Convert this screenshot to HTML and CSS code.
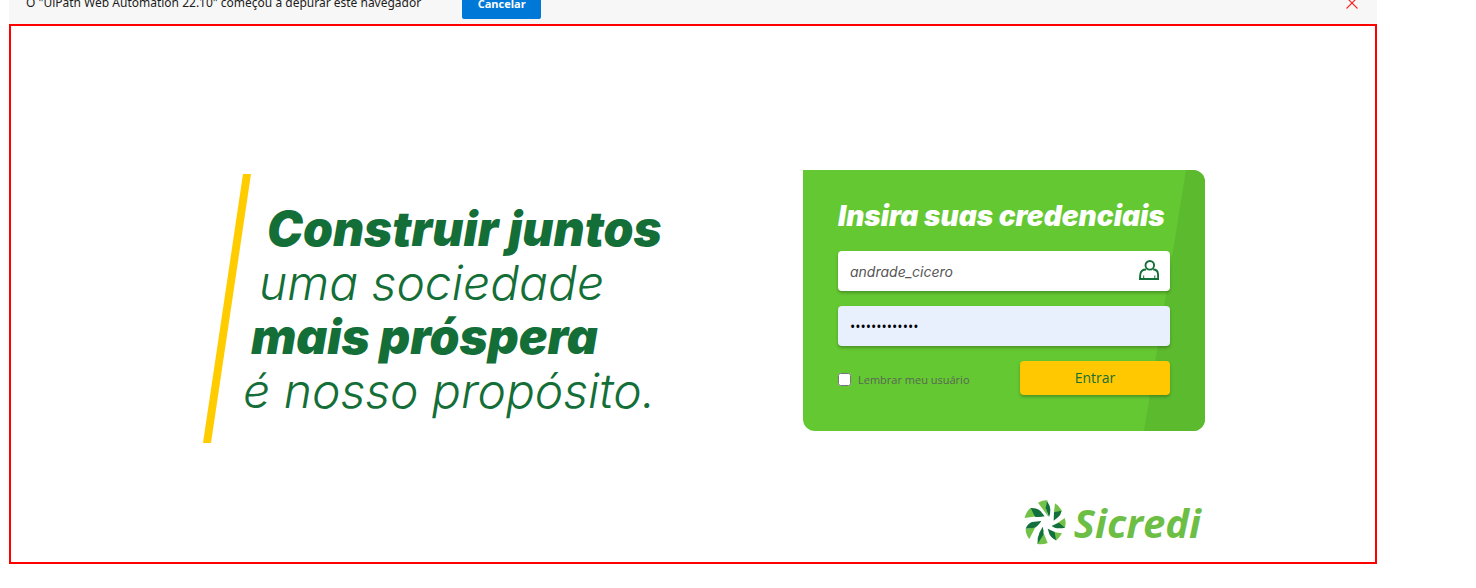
FILE: index.html
```
<!DOCTYPE html>
<html lang="pt-BR">
<head>
<meta charset="utf-8">
<title>Sicredi</title>
<link rel="stylesheet" href="styles.css">
</head>
<body>
<div class="window">
  <header class="infobar-clip">
    <div class="infobar">
      <span class="infobar-text">O "UiPath Web Automation 22.10" começou a depurar este navegador</span>
      <button class="infobar-cancel" type="button">Cancelar</button>
      <button class="infobar-close" type="button" aria-label="Fechar">
        <svg width="12" height="12" viewBox="0 0 12 12"><path d="M0.5 0.5 11.5 11.5M11.5 0.5 0.5 11.5" fill="none" stroke="#f22" stroke-width="1.1"/></svg>
      </button>
    </div>
  </header>
  <main class="page">
    <section class="slogan">
      <div class="slogan-bar"></div>
      <div class="slogan-lines">
        <div class="line strong step-3">Construir juntos</div>
        <div class="line light step-2">uma sociedade</div>
        <div class="line strong step-1">mais próspera</div>
        <div class="line light">é nosso propósito.</div>
      </div>
    </section>
    <section class="side">
      <form class="card">
        <h1 class="title">Insira suas credenciais</h1>
        <div class="field">
          <input class="input user" type="text" aria-label="Usuário" value="andrade_cicero">
          <svg class="user-icon" width="20" height="20" viewBox="0 0 20 20" fill="none" stroke="#146e37" stroke-width="1.9"><circle cx="10.8" cy="5.3" r="4.3"/><path d="M7.2 9.5C3.4 9.5 1.6 11.6 1.3 14.3L.9 19H19.2L19 14C18.8 11.2 17 9.5 14.2 9.5"/><path d="M4.7 15.5V19M15.8 15.5V19" stroke-width="1"/></svg>
        </div>
        <div class="field">
          <input class="input password" type="password" aria-label="Senha" value="abcdefghijklm">
        </div>
        <div class="actions">
          <label class="remember"><input class="check" type="checkbox"> Lembrar meu usuário</label>
          <button class="enter" type="button">Entrar</button>
        </div>
      </form>
      <div class="brand">
        <svg class="brand-mark" width="42" height="45" viewBox="28 30 126 135">
          <g fill="#72c247"><path d="M70 38Q85 30 98 31L94 54L101 80Z"/><path d="M121 40Q134 48 141 62L118 90L118 65Z"/><path d="M150 84Q155 98 151 113L112 108L132 97Z"/><path d="M142 130Q135 143 124 152L108 124L122 127Z"/><path d="M99 159Q84 165 68 162L76 130L87 130Z"/><path d="M44 147Q33 134 33 117L62 112Z"/><path d="M30 84Q34 65 48 53L66 79Z"/></g>
          <g fill="#11703b"><path d="M97 33Q107 47 107 60Q107 73 103 81L93 54Z"/><path d="M141 62Q138 76 130 82L117 92L118 67Z"/><path d="M151 113Q132 116 120 113L111 108L133 98Z"/><path d="M124 151Q109 142 105 134L99 116L120 126Z"/><path d="M69 161Q67 143 75 127L84 110Q88 121 86 134Z"/><path d="M33 116Q39 101 52 96L80 93Q70 109 60 113Z"/><path d="M48 54Q68 53 78 64L90 79Q73 83 61 80Z"/></g>
        </svg>
        <span class="brand-name">Sicredi</span>
      </div>
    </section>
  </main>
</div>
</body>
</html>
```
FILE: styles.css
```
* { box-sizing: border-box; }
body { margin: 0; background: #fff; font-family: "Open Sans", sans-serif; }
button, input { font-family: inherit; }
.window { margin: 0 99px 0 9px; }

.infobar-clip { display: flex; align-items: flex-end; height: 24px; overflow: hidden; background: #f7f7f7; }
.infobar { display: flex; flex: 1; align-items: center; gap: 41px; height: 42px; padding: 0 19px 0 17px; }
.infobar-text { font-family: "Noto Sans", sans-serif; font-size: 12px; line-height: 16px; color: #1c1c1c; white-space: nowrap; }
.infobar-cancel { width: 79px; height: 32px; padding: 0; border: 0; border-radius: 2px; background: #0078d7; color: #fff; font-size: 11px; font-weight: 700; }
.infobar-close { display: flex; margin-left: auto; padding: 0; border: 0; background: none; }

.page { display: flex; justify-content: space-between; padding: 144px 170px 17px 192px; border: 2px solid #f00; }

.slogan { display: flex; padding-top: 4px; color: #146e37; font-family: Inter, sans-serif; font-style: italic; }
.slogan-bar { width: 48px; height: 269px; margin-right: -8px; background: #fc0; clip-path: polygon(40px 0, 48px 0, 8px 100%, 0 100%); }
.slogan-lines { padding-top: 28px; }
.line { line-height: 54px; white-space: nowrap; }
.strong { font-size: 48px; font-weight: 900; }
.light { font-size: 48px; font-weight: 300; }
.step-1 { padding-left: 8px; }
.step-2 { padding-left: 16px; }
.step-3 { padding-left: 24px; }

.side { display: flex; flex-direction: column; gap: 69px; width: 402px; }
.card { position: relative; padding: 24px 35px 36px; border-radius: 0 12px 12px 12px; background: #64c832; overflow: hidden; }
.card::before { content: ""; position: absolute; top: 0; right: 0; bottom: 0; width: 61px; background: #5cba2e; clip-path: polygon(42px 0, 100% 0, 100% 100%, 0 100%); }
.title { position: relative; margin: 0 0 13px; color: #fff; font-family: Inter, sans-serif; font-size: 28px; font-style: italic; font-weight: 900; line-height: 44px; white-space: nowrap; }
.field { position: relative; margin-bottom: 15px; }
.input { display: block; width: 100%; height: 40px; padding: 0 12px; border: 0; border-radius: 4px; background: #fff; color: #555; font-size: 14px; box-shadow: 0 2px 3px rgba(0, 0, 0, .25); }
.user { font-family: Inter, sans-serif; font-style: italic; }
.password { background: #e8f0fe; color: #000; font-size: 14px; }
.user-icon { position: absolute; top: 9px; right: 11px; }
.actions { position: relative; display: flex; align-items: center; justify-content: space-between; }
.remember { display: flex; align-items: center; gap: 7px; padding-top: 3px; color: #5a6656; font-size: 11px; }
.check { width: 13px; height: 13px; margin: 0; }
.enter { width: 150px; height: 34px; padding-bottom: 3px; border: 0; border-radius: 4px; background: #ffc800; color: #146e37; font-size: 14px; box-shadow: 0 2px 3px rgba(0, 0, 0, .25); }

.brand { display: flex; align-items: center; justify-content: flex-end; gap: 8px; padding-right: 4px; }
.brand-name { color: #6cbe45; font-size: 40px; font-style: italic; font-weight: 700; line-height: 45px; }
```
